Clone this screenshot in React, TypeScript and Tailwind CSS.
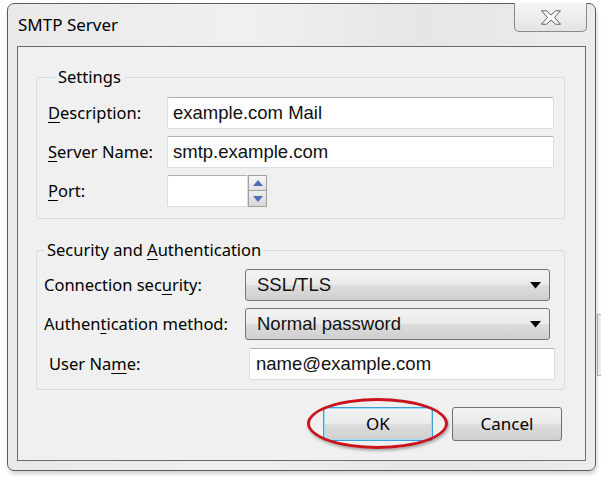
import React from "react";

const labelFont = { fontFamily: '"Noto Sans", "Open Sans", sans-serif' };
const fieldFont = { fontFamily: '"Liberation Sans", Arial, sans-serif' };

function TextBox({ value, className }: { value: string; className: string }) {
  return (
    <div
      className={
        "h-[32px] bg-white border border-[#d7dee4] border-t-[#adb2b8] rounded-[2px] flex items-center text-[18.5px] text-[#111] " +
        className
      }
      style={fieldFont}
    >
      {value}
    </div>
  );
}

function Combo({ value }: { value: string }) {
  return (
    <div
      className="h-[32px] w-[305px] border border-[#767676] rounded-[3px] bg-[linear-gradient(to_bottom,#f3f3f3_0%,#ebebeb_48%,#dddddd_52%,#cfcfcf_100%)] flex items-center pl-[11px] pr-[8px] text-[18.5px] text-[#111]"
      style={fieldFont}
    >
      <span className="flex-1">{value}</span>
      <svg width="11" height="7" viewBox="0 0 11 7">
        <polygon points="0,0 11,0 5.5,6.5" fill="#000" />
      </svg>
    </div>
  );
}

function Btn({ children, ok }: { children: React.ReactNode; ok?: boolean }) {
  return (
    <div
      className={
        "h-[34px] w-[110px] rounded-[3px] border flex items-center justify-center text-[17px] text-black bg-[linear-gradient(to_bottom,#f3f3f3_0%,#ebebeb_48%,#dddddd_52%,#cfcfcf_100%)] " +
        (ok ? "border-[#3c9fd6] shadow-[inset_0_0_0_1px_#9fdcf6]" : "border-[#707070]")
      }
      style={labelFont}
    >
      {children}
    </div>
  );
}

export default function App() {
  return (
    <div className="w-[601px] h-[479px] bg-white relative overflow-hidden" style={labelFont}>
      {/* window peeking from behind on the right */}
      <div className="absolute left-[597px] top-[314px] w-[8px] h-[62px] border-t border-b border-l border-[#b8b8b8] bg-[#f0f0f0]" />

      <div className="pl-[7px] pt-[3px]">
        <div className="relative w-[589px] h-[468px] rounded-[7px] border border-[#5c5c5c] bg-[linear-gradient(to_right,#e9e9e9,#f0f0f0_40%,#e6e6e6_70%,#ececec)] shadow-[1px_3px_4px_rgba(0,0,0,0.18)] flex flex-col">
          {/* title bar */}
          <div className="h-[42px] flex items-start">
            <div className="pl-[10px] h-[42px] flex items-center text-[17px] text-black">SMTP Server</div>
            <div className="ml-auto mr-[8px] -mt-[1px] w-[73px] h-[29px] border border-[#8a8a8a] border-t-0 rounded-b-[5px] bg-[linear-gradient(to_bottom,#f6f6f6,#e4e4e4)] flex items-center justify-center">
              <svg width="22" height="15" viewBox="0 0 22 15">
                <polygon
                  points="1.5,0.8 6.5,0.8 11,5 15.5,0.8 20.5,0.8 14.5,7.5 20.5,14.2 15.5,14.2 11,10 6.5,14.2 1.5,14.2 7.5,7.5"
                  fill="#fbfbfb"
                  stroke="#5e5e5e"
                  strokeWidth="1"
                  strokeLinejoin="round"
                />
              </svg>
            </div>
          </div>

          {/* client area */}
          <div className="mx-[9px] h-[415px] border border-[#6c6c6c] bg-[#f0f0f0] flex flex-col">
            {/* Settings */}
            <fieldset className="mt-[19px] ml-[18px] mr-[20px] border border-[#d3dce2] rounded-[3px] pl-[11px] pr-[10px] pb-[11px]">
              <legend className="ml-[7px] px-[3px] text-[16.5px] leading-[22px] text-black">Settings</legend>
              <div className="pt-[9px] flex flex-col gap-[7px]">
                <div className="flex items-center">
                  <div className="w-[119px] text-[16.5px] text-black">
                    <u className="underline-offset-[3px]">D</u>escription:
                  </div>
                  <TextBox value="example.com Mail" className="flex-1 h-[31px] pl-[5px]" />
                </div>
                <div className="flex items-center">
                  <div className="w-[119px] text-[16.5px] text-black">
                    <u className="underline-offset-[3px]">S</u>erver Name:
                  </div>
                  <TextBox value="smtp.example.com" className="flex-1 h-[31px] pl-[5px]" />
                </div>
                <div className="flex items-center">
                  <div className="w-[119px] text-[16.5px] text-black">
                    <u className="underline-offset-[3px]">P</u>ort:
                  </div>
                  <TextBox value="" className="w-[81px] pl-[5px] rounded-r-none" />
                  <div className="flex flex-col w-[19px] h-[32px]">
                    <div className="h-[16px] border border-[#a0a0a0] bg-[linear-gradient(to_bottom,#f6f6f6,#e2e2e2)] flex items-center justify-center">
                      <svg width="10" height="6" viewBox="0 0 10 6">
                        <polygon points="0,6 10,6 5,0" fill="#4a6db5" />
                      </svg>
                    </div>
                    <div className="h-[16px] border border-t-0 border-[#a0a0a0] bg-[linear-gradient(to_bottom,#eeeeee,#d8d8d8)] flex items-center justify-center">
                      <svg width="10" height="6" viewBox="0 0 10 6">
                        <polygon points="0,0 10,0 5,6" fill="#4a6db5" />
                      </svg>
                    </div>
                  </div>
                </div>
              </div>
            </fieldset>

            {/* Security and Authentication */}
            <fieldset className="mt-[20px] ml-[18px] mr-[20px] border border-[#d3dce2] rounded-[3px] pb-[9px]">
              <legend className="ml-[7px] px-[3px] text-[16.5px] leading-[22px] text-black">
                Security and <u className="underline-offset-[3px]">A</u>uthentication
              </legend>
              <div className="pt-[8px] flex flex-col gap-[7px]">
                <div className="flex items-center pl-[7px]">
                  <div className="w-[201px] text-[16.5px] text-black">
                    Connection sec<u className="underline-offset-[3px]">u</u>rity:
                  </div>
                  <Combo value="SSL/TLS" />
                </div>
                <div className="flex items-center pl-[7px]">
                  <div className="w-[201px] text-[16.5px] text-black">
                    Authen<u className="underline-offset-[3px]">t</u>ication method:
                  </div>
                  <Combo value="Normal password" />
                </div>
                <div className="flex items-center pl-[12px] pr-[9px] mt-[1px]">
                  <div className="w-[200px] text-[16.5px] text-black">
                    User Na<u className="underline-offset-[3px]">m</u>e:
                  </div>
                  <TextBox value="name@example.com" className="flex-1 pl-[6px]" />
                </div>
              </div>
            </fieldset>

            {/* buttons */}
            <div className="mt-[17px] flex justify-end gap-[19px] pr-[23px]">
              <div className="relative">
                <Btn ok>OK</Btn>
                <div className="absolute -left-[16px] -top-[9px] w-[141px] h-[51px] rounded-[50%] border-[3px] border-[#c8151d] shadow-[1px_2px_3px_rgba(0,0,0,0.3)] pointer-events-none" />
              </div>
              <Btn>Cancel</Btn>
            </div>
          </div>
        </div>
      </div>
    </div>
  );
}
